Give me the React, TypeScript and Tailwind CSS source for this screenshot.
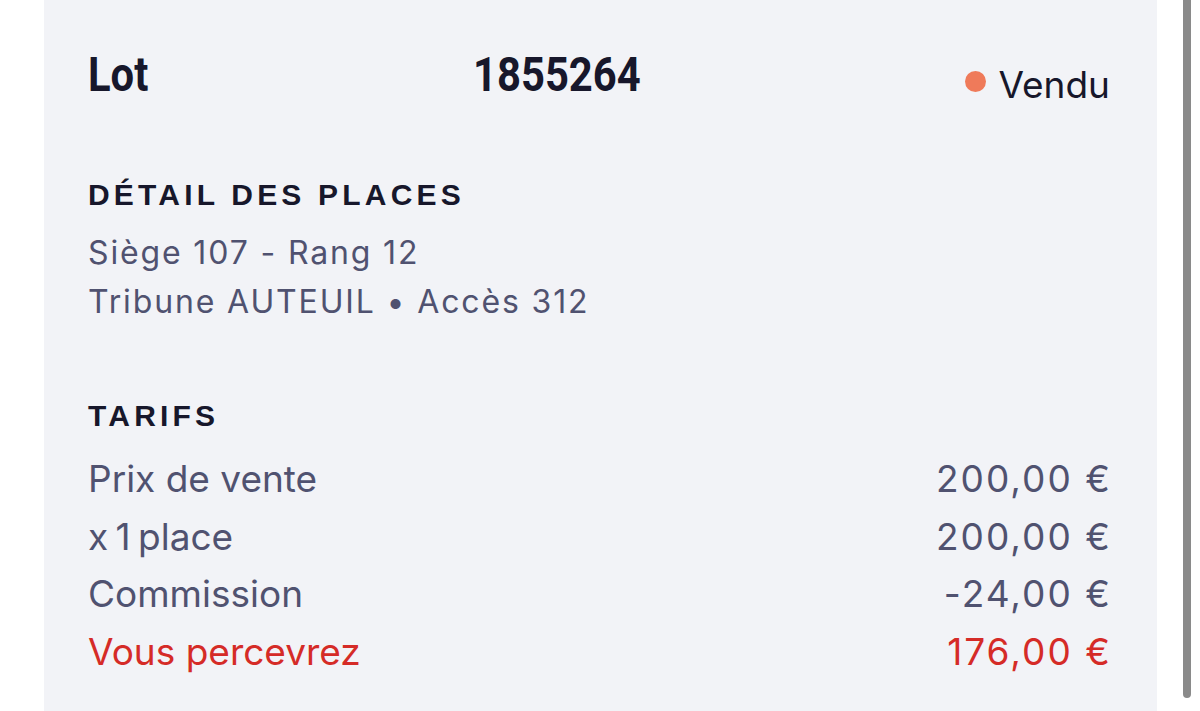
import React from "react";

const rows = [
  { label: "Prix de vente", value: "200,00 €" },
  { label: "x 1 place", value: "200,00 €" },
  { label: "Commission", value: "-24,00 €" },
];

export default function App() {
  return (
    <div className="flex h-[711px] w-[1200px] overflow-hidden bg-white pl-[44px]">
      <div className="h-[711px] w-[1113px] shrink-0 bg-[#f2f3f7] pl-[44px] pr-[47px] pt-[51px] font-['Inter',sans-serif]">
        {/* HEADER */}
        <div className="flex h-[54px] items-start">
          <div className="w-[385px] shrink-0 font-['Roboto',sans-serif] text-[48px] font-bold leading-[48px] text-[#17172b]">
            <span className="inline-block origin-left scale-x-[0.87]">Lot</span>
          </div>
          <div className="flex-1 font-['Roboto',sans-serif] text-[48px] font-bold leading-[48px] text-[#17172b]">
            <span className="inline-block origin-left scale-x-[0.87]">1855264</span>
          </div>
          <div className="mt-[14px] flex items-center gap-3 text-[37px] leading-[40px] text-[#17172b]">
            <span className="relative -top-1 h-[21px] w-[21px] rounded-full bg-[#ef7a5a]" />
            <span>Vendu</span>
          </div>
        </div>

        {/* PLACES */}
        <div className="mt-[75px] font-['Liberation_Sans',sans-serif] text-[30px] font-bold leading-[30px] tracking-[0.14em] text-[#17172b]">
          DÉTAIL DES PLACES
        </div>
        <div className="mt-[18px] text-[32px] leading-[49px] tracking-[0.058em] text-[#505270]">
          <div>Siège 107 - Rang 12</div>
          <div>Tribune AUTEUIL • Accès 312</div>
        </div>

        {/* TARIFS */}
        <div className="mt-[75px] font-['Liberation_Sans',sans-serif] text-[30px] font-bold leading-[30px] tracking-[0.14em] text-[#17172b]">
          TARIFS
        </div>
        <div className="mt-[19px] text-[37px] leading-[57.5px]">
          {rows.map((r) => (
            <div key={r.label} className="flex justify-between text-[#505270]">
              <span className={r.label === "x 1 place" ? "[word-spacing:-3px]" : ""}>{r.label}</span>
              <span className="-mr-[2px] tracking-[0.055em]">{r.value}</span>
            </div>
          ))}
          <div className="flex justify-between text-[#d52b27]">
            <span>Vous percevrez</span>
            <span className="-mr-[2px] tracking-[0.055em]">176,00 €</span>
          </div>
        </div>
      </div>
      <div className="ml-[26px] h-[698px] w-[8px] shrink-0 rounded-b-full bg-[#8a8a8a]" />
    </div>
  );
}
